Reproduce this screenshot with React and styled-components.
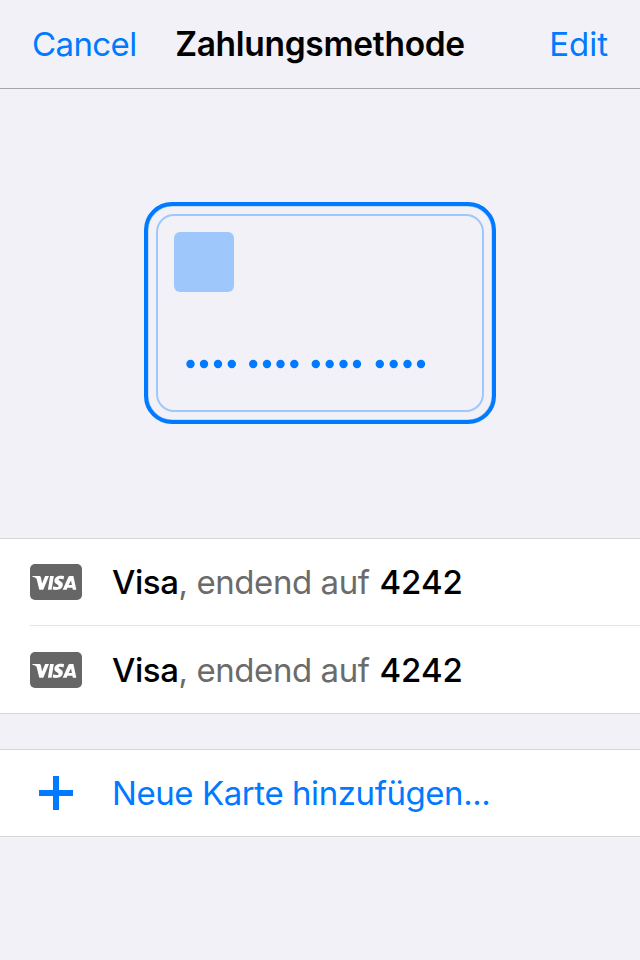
import React from 'react';
import styled, { createGlobalStyle } from 'styled-components';

const GlobalStyle = createGlobalStyle`
  * { box-sizing: border-box; }
  body { margin: 0; background: #f2f1f7; font-family: Inter, sans-serif; }
`;
const Screen = styled.main`
  width: 640px; height: 960px; display: flex; flex-direction: column;
  background: #f2f1f7; overflow: hidden;
`;
const NavBar = styled.header`
  height: 89px; flex: none; display: grid; grid-template-columns: 1fr auto 1fr;
  padding: 0 32px; border-bottom: 1px solid #a6a6aa; line-height: 88px;
`;
const NavButton = styled.button`
  border: 0; padding: 0; background: none; font: 400 33px/88px Inter, sans-serif;
  color: #007aff; justify-self: ${({ $end }) => ($end ? 'end' : 'start')};
  letter-spacing: ${({ $end }) => ($end ? '0' : '-0.6px')};
`;
const Title = styled.h1`
  margin: 0; font-size: 33.5px; font-weight: 600; letter-spacing: -0.3px; color: #000;
`;
const Hero = styled.section`
  height: 449px; flex: none; display: flex; justify-content: center; padding-top: 113px;
`;
const CardDrawing = styled.svg` width: 352px; height: 222px; display: block; `;
const Group = styled.section`
  background: #fff; border-top: 1px solid #d6d6da; border-bottom: 1px solid #d6d6da;
  margin-bottom: 35px; padding-left: 30px; flex: none;
`;
const Row = styled.div`
  height: 86px; display: flex; align-items: center;
  & + & { height: 88px; border-top: 1px solid #e5e5e8; }
`;
const IconSlot = styled.div` width: 82px; flex: none; display: flex; `;
const Label = styled.span`
  font-size: 33px; line-height: 44px; white-space: pre; letter-spacing: -0.43px;
  color: ${({ $link }) => ($link ? '#007aff' : '#6b6b6b')};
`;
const Strong = styled.span`
  color: #000; font-weight: 500; letter-spacing: ${({ $digits }) => ($digits ? '0' : 'inherit')};
  margin-left: ${({ $digits }) => ($digits ? '1px' : '0')};
`;

const VisaIcon = () => (
  <svg width="52" height="36" viewBox="0 0 52 36">
    <rect width="52" height="36" rx="5" fill="#666" />
    <g fill="#fff">
      <path d="M2.400 12.100h6.700c.9 0 1.600.3 1.800 1.200l1.200 6.200L15.100 12.100h3.900l-5.700 13.600H9.300L6.700 15.300C6.400 14 4.900 13.100 2.400 12.700z" />
      <path d="M20.100 12.100h3.700l-2.200 13.600h-3.700z" />
      <path d="M34.100 12.300 33.500 15.400c-2.200-.9-4.700-.9-4.800.4 0 1.300 4.300 1.600 4.100 5-.2 4.500-5.600 6.100-10.100 4.700l.5-3.200c2.300 1.100 5.300 1.100 5.400-.4.100-1.300-4.300-1.700-4.200-5.100.2-4.600 5.400-5.800 9.700-4.500z" />
      <path fillRule="evenodd" d="M40 12.100h3.400l2.900 13.600h-3.400l-.5-1.900h-4.900l-.9 1.900h-3.900l5.500-12.400c.3-.8.900-1.200 1.800-1.200zm1 4.400L38.600 21.100h3.300z" />
    </g>
  </svg>
);
const PlusIcon = () => (
  <svg width="52" height="36" viewBox="0 0 52 36"><path d="M9 18h34M26 1v34" stroke="#007aff" strokeWidth="6" /></svg>
);
const dots = [46.5, 60, 74, 87.8, 109.2, 123, 136.500, 150.300, 171.800, 185.700, 199.500, 213, 235.800, 249.700, 263.500, 277];

function PaymentRow({ ending }) {
  return (
    <Row>
      <IconSlot><VisaIcon /></IconSlot>
      <Label><Strong>Visa</Strong>, endend auf <Strong $digits>{ending}</Strong></Label>
    </Row>
  );
}
export default function App() {
  return (
    <Screen>
      <GlobalStyle />
      <NavBar>
        <NavButton>Cancel</NavButton><Title>Zahlungsmethode</Title><NavButton $end>Edit</NavButton>
      </NavBar>
      <Hero>
        <CardDrawing viewBox="0 0 352 222">
          <rect x="2.500" y="2.500" width="347" height="217" rx="26" fill="none" stroke="#9ec8fb" strokeWidth="4" />
          <rect x="2" y="2" width="348" height="218" rx="26" fill="none" stroke="#007aff" strokeWidth="4" />
          <rect x="13" y="13" width="326" height="196" rx="17" fill="none" stroke="#9ec8fb" strokeWidth="2" />
          <rect x="30" y="30" width="60" height="60" rx="6" fill="#9ec8fb" />
          {dots.map((x) => <circle key={x} cx={x} cy="162" r="4.2" fill="#007aff" />)}
        </CardDrawing>
      </Hero>
      <Group><PaymentRow ending="4242" /><PaymentRow ending="4242" /></Group>
      <Group><Row><IconSlot><PlusIcon /></IconSlot><Label $link>Neue Karte hinzufügen...</Label></Row></Group>
    </Screen>
  );
}
